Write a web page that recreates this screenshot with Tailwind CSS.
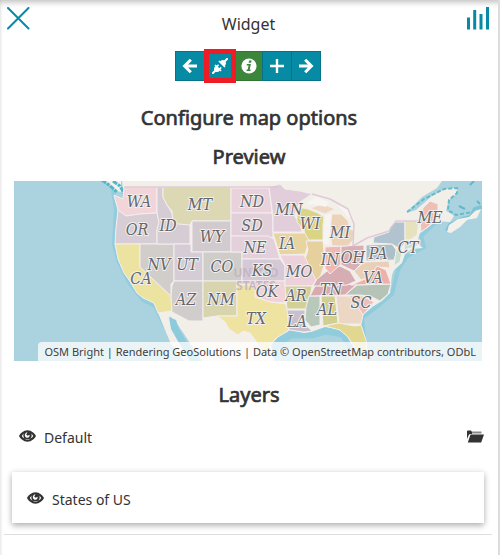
<!DOCTYPE html>
<html lang="en">
<head>
<meta charset="utf-8">
<meta name="viewport" content="width=device-width, initial-scale=1">
<title>Widget</title>
<script src="https://cdn.jsdelivr.net/npm/@tailwindcss/browser@4"></script>
</head>
<body class="bg-white text-[#333333] font-['Noto_Sans',sans-serif]">
<main class="min-h-screen border-r-2 border-[#dcdcdc] shadow-[inset_0_8px_6px_-6px_#bbbbbb,inset_4px_0_3px_-3px_#e4e4e4]">
  <header class="flex items-start justify-between pt-[7px] pl-[7px] pr-2">
    <button type="button" aria-label="Close" class="size-[23px]">
      <svg viewBox="0 0 23 23" class="size-full" fill="none" stroke="#078aa3" stroke-width="2" stroke-linecap="round"><path d="M1 1 21.500 21.500M21.500 1 1 21.500"/></svg>
    </button>
    <h1 class="mt-[6px] text-[16px] leading-[22px]">Widget</h1>
    <svg viewBox="0 0 23 23" class="size-[23px]" fill="#078aa3" role="img" aria-label="Chart widget"><path d="M0 10.500h3V22.500H0zM6.200 3h3V22.500h-3zM12.500 7h3V22.500h-3zM19 0h3V22.500h-3z"/></svg>
  </header>

  <nav aria-label="Widget steps" class="mt-4 flex justify-center pr-[2px]">
    <button type="button" aria-label="Back" class="flex h-[30px] w-[30px] items-center justify-center border border-[#067488] bg-[#078aa3]">
      <svg viewBox="0 0 16 16" class="size-4" fill="none" stroke="#fff" stroke-width="3"><path d="M15 8H3M8.800 1.800 2.600 8l6.200 6.200"/></svg>
    </button>
    <button type="button" aria-label="Connect to map" class="relative z-10 -ml-px flex h-[30px] w-[32px] items-center justify-center border border-[#067488] bg-[#078aa3]">
      <svg viewBox="0 0 16 16" class="size-4" fill="none" stroke="#fff"><path fill="#fff" stroke="none" d="M6.400 3.600 7.600 2.400 8.400 3.200C9.600 1.800 11.200 1.600 12.600 2.600L13.400 3.400C14.400 4.800 14.200 6.400 12.800 7.600L13.600 8.400 12.400 9.600zM2.400 7.600 3.600 6.400 9.600 12.400 8.400 13.600 7.600 12.800C6.400 14.200 4.800 14.400 3.400 13.400L2.600 12.600C1.600 11.200 1.800 9.600 3.200 8.400z"/><path stroke-width="2" d="M12.500 3.500 15.700.3M3.500 12.500.3 15.700"/><path stroke-width="1.600" d="M4.800 8.600 6.600 6.800M7.400 11.200 9.200 9.400"/></svg>
      <span class="absolute -inset-x-px -inset-y-[3px] border-[5px] border-[#ee1c25]"></span>
    </button>
    <button type="button" aria-label="Information" class="-ml-px flex h-[30px] w-[28px] items-center justify-center border border-[#327531] bg-[#3b863a]">
      <svg viewBox="0 0 16 16" class="size-4"><circle cx="8" cy="8" r="7.600" fill="#fff"/><path fill="#3b863a" d="M8.100 2.400h2.500l-.5 2.400H7.600zM5.900 6h4L8.700 11.600h1l-.3 1.400H5.500l.3-1.400h.9L7.600 7.400h-2z"/></svg>
    </button>
    <button type="button" aria-label="Add" class="-ml-px flex h-[30px] w-[30px] items-center justify-center border border-[#067488] bg-[#078aa3]">
      <svg viewBox="0 0 16 16" class="size-4" fill="#fff"><path d="M6.800 1h2.400v5.800H15v2.400H9.200V15H6.800V9.200H1V6.800h5.800z"/></svg>
    </button>
    <button type="button" aria-label="Next" class="-ml-px flex h-[30px] w-[30px] items-center justify-center border border-[#067488] bg-[#078aa3]">
      <svg viewBox="0 0 16 16" class="size-4" fill="none" stroke="#fff" stroke-width="3"><path d="M1 8h12M7.200 1.800 13.400 8l-6.200 6.200"/></svg>
    </button>
  </nav>

  <section class="mt-6 text-center">
    <h2 class="text-[20px] leading-[26px] font-normal [-webkit-text-stroke:0.7px_#333333]">Configure map options</h2>
    <h3 class="mt-[13px] text-[20px] leading-[26px] font-normal [-webkit-text-stroke:0.7px_#333333]">Preview</h3>
    <div class="relative mt-[11px] ml-[14px] mr-4">
      <svg viewBox="14 181 468 180" class="block w-full" role="img" aria-label="Map of the United States">
        <rect x="14" y="181" width="468" height="180" fill="#aad3df"/>
        <!-- shallow water along the coasts -->
        <g fill="none" stroke="#8ccbdc" stroke-width="4" stroke-linejoin="round" opacity=".8">
          <path d="M113 190 116 210 114 244 118 260 129 282 143 300 155 306 166 328 182 350 192 361M168 318 180 334 194 361"/>
          <path stroke-width="9" d="M275 358 274 346 290 334 312 334 326 330 343 333 357 353"/>
          <path d="M366 358 362 318 374 309 392 294 398 270 407 256 424 247 421 236 436 222"/>
        </g>
        <!-- mainland -->
        <path fill="#f2efe9" d="M122 181H442L437 188 422 197 408 211 407 213 416 210 432 196 445 189 457 189 455 195 447 200 446 211 453 215 449 221 438 218 430 226 420 233 417 243 423 248 412 249 405 254 402 263 394 270 392 275 391 284 390 293 382 301 372 307 362 316 361 325 367 345 366 361H362L355 350 347 336 338 329 325 327 311 332 304 333 290 330 278 337 271 345 274 361H202L188 340 178 325 170 316 172 326 181 344 194 361H184L171 344 165 330 158 313 154 303 143 298 137 293 129 280 124 273 118 259 115 244 116 228 118 210 114 197 124 199Z"/>
        <path fill="#8ccbdc" d="M169 317 176 320 180 332 188 344 199 361H190L179 343 171 329Z"/>
        <!-- Nova Scotia and the Gulf of St Lawrence -->
        <path fill="#f2efe9" d="M430 199 443 190 455 188 458 192 449 200 446 211 454 216 450 222 436 221Z"/>
        <path fill="none" stroke="#7cc5d4" stroke-width="4" stroke-linejoin="round" d="M447 231 450 225 462 219 471 217 475 209 482 207"/>
        <path fill="#f4f1ec" d="M447 232 449 225 458 219 469 217 475 211 481 209 477 218 467 220 460 227 451 233Z"/>
        <path fill="none" stroke="#67bac9" stroke-width="2" stroke-dasharray="4 2" d="M407 212 424 199 444 189 457 188 457 193 449 200 448 210 456 215 472 212"/>
        <path fill="none" stroke="#5fb9cb" stroke-width="2" d="M470 185 474 181M459 206 465 209M477 201 480 204"/>
        <path fill="#f4f1ec" d="M104 181H121L121 192 117 191Z"/>
        <path fill="none" stroke="#51b6c8" stroke-width="3" stroke-dasharray="5 1 3 1" d="M102 180 109 185 117 192M113 181 120 186 125 195 125 203"/>
        <!-- states -->
        <g stroke="#f3eeee" stroke-width="1" stroke-linejoin="round">
          <path fill="#f2d5d9" d="M114 195 123 199 124 187H157V213L140 214 126 216 118 210Z"/>
          <path fill="#d7cdd5" d="M118 210 126 216 140 214 157 213 159 222 157 230V244H115L116 228Z"/>
          <path fill="#ece3a0" d="M115 244H140V267L171 296 172 311 158 313 154 303 143 298 137 293 129 280 124 273 118 259Z"/>
          <path fill="#d0cdca" d="M140 244H174V281L171 284V296L140 267Z"/>
          <path fill="#d5ccd4" d="M157 187H163V197L167 205 172 213 173 223 190 224V244H157V230L159 222 157 213Z"/>
          <path fill="#ddd8b4" d="M163 187H231V221H192L190 225 178 224 173 222 172 211 167 205 163 197Z"/>
          <path fill="#d1cacf" d="M192 221H231V252H192Z"/>
          <path fill="#d6ccd5" d="M174 244H191V252H203V281H174Z"/>
          <path fill="#cfcdca" d="M203 252H242V281H203Z"/>
          <path fill="#d2cdcd" d="M174 281H203V321H189L172 312 171 296 172 286Z"/>
          <path fill="#d8d4ae" d="M203 281H237V316H217L203 318Z"/>
          <path fill="#ead2dc" d="M231 188H269L272 213H231Z"/>
          <path fill="#e3cfda" d="M231 213H272L273 220V238L268 237 231 236Z"/>
          <path fill="#e4d0db" d="M231 236H268L274 239 280 259H242V252H231Z"/>
          <path fill="#d5c9d8" d="M242 259H280L285 266V281H242Z"/>
          <path fill="#f0d3d9" d="M237 281H285L286 303 270 302 255 297V285H237Z"/>
          <path fill="#eee3a0" d="M237 285H255V297L270 302 286 304 288 315 290 325 288 331 276 338 270 346 272 356 262 351 256 341 250 333 243 331 238 335 229 329 225 322 217 316H237Z"/>
          <path fill="#e2cedb" d="M269 187 280 184 285 189 300 191 312 194 300 202 296 211 295 217 300 224 302 232H273V216Z"/>
          <path fill="#dad486" d="M297 207 308 209 318 213 324 217 323 225V240H306L304 230 297 222Z"/>
          <path fill="#e8d49f" d="M273 233H305L309 241 305 254 280 255Z"/>
          <path fill="#e6d09d" d="M306 241H323L325 262 321 275 316 281 309 270 304 262 308 250Z"/>
          <path fill="#ecd0da" d="M280 255H304L310 268 316 280 312 286H285V265Z"/>
          <path fill="#d2d096" d="M285 286H312L310 297 306 309H287Z"/>
          <path fill="#c7c0ce" d="M287 310H305V324L312 331 304 332 289 330Z"/>
          <path fill="#b8c9bc" d="M309 296H320V325L311 327 305 320 306 307Z"/>
          <path fill="#d0cf90" d="M321 296H335L338 323 323 326Z"/>
          <path fill="#ecd6c4" d="M336 296H349L355 302 363 315 361 324H339Z"/>
          <path fill="#e2d78e" d="M325 326 338 323 355 326 361 325 366 340 367 352 364 361 357 351 348 337 340 330Z"/>
          <path fill="#efbfb7" d="M349 296 360 295 374 302 363 315 356 304Z"/>
          <path fill="#b6c4b7" d="M345 295 357 285 391 284 388 294 380 301 370 296 360 295Z"/>
          <path fill="#d9abb1" d="M315 286 357 284 345 295 310 296Z"/>
          <path fill="#d6adb3" d="M317 279 327 271 340 266 350 271 356 281 347 285 313 286Z"/>
          <path fill="#efb8b2" d="M325 247 341 246V264L330 274 325 268Z"/>
          <path fill="#d8b0b6" d="M341 246 364 245V258L360 265 354 271 341 265Z"/>
          <path fill="#eacfb8" d="M354 271 364 262 389 261 390 268 377 267 370 277 361 280Z"/>
          <path fill="#efb0aa" d="M351 285 370 277 377 266 386 270 391 284Z"/>
          <path fill="#acc0ca" d="M366 245 392 244 397 251 394 260 366 261Z"/>
          <path fill="#b1c3cf" d="M374 237 389 232 390 227 396 222H405V243L400 249 392 244 373 243Z"/>
          <path fill="#e5e2bd" d="M405 221H419L417 235 410 240H405Z"/>
          <path fill="#c9e0ce" d="M405 240H420L417 246 404 250ZM396 250 402 252 400 262 394 266Z"/>
          <path fill="#efbeb4" d="M420 221 423 208 430 201 438 204V217L430 225 421 232Z"/>
          <path fill="#ecd2b6" d="M332 214 341 214 348 221 350 229 354 231 353 240 348 246H332L330 230Z"/>
          <path fill="#eed8c3" d="M310 208 323 204 335 209 325 214Z"/>
        </g>
        <path fill="#f7f4f1" d="M306 204 316 197 329 202 326 207 317 205ZM325 215 331 214 329 245 323 244ZM337 205 348 208 354 219 348 217Z"/>
        <path fill="none" stroke="#dbc0d2" stroke-width="1.500" stroke-linejoin="round" opacity=".8" d="M124 187H278M312 194 330 199 348 209 354 224 353 246 367 238 389 231 396 221H419"/>
        <g fill="#c4b6bf" font-family="'Noto Sans',sans-serif" font-size="12" font-weight="600" text-anchor="middle">
          <text x="256" y="277">UNITED</text><text x="256" y="290">STATES</text>
        </g>
        <g fill="#65666a" stroke="#f4f0ee" stroke-width="2" paint-order="stroke" stroke-linejoin="round" font-family="'DejaVu Serif Condensed','DejaVu Serif',serif" font-style="italic" font-size="16" text-anchor="middle">
          <text x="139" y="207">WA</text><text x="137" y="235">OR</text><text x="168" y="231">ID</text>
          <text x="200" y="210">MT</text><text x="252" y="207">ND</text><text x="289" y="215">MN</text>
          <text x="212" y="242">WY</text><text x="252" y="231">SD</text><text x="310" y="229">WI</text>
          <text x="340" y="238">MI</text><text x="255" y="253">NE</text><text x="287" y="249">IA</text>
          <text x="159" y="270">NV</text><text x="187" y="270">UT</text><text x="222" y="272">CO</text>
          <text x="262" y="276">KS</text><text x="299" y="277">MO</text><text x="330" y="265">IN</text>
          <text x="353" y="263">OH</text><text x="378" y="259">PA</text><text x="408" y="253">CT</text>
          <text x="430" y="223">ME</text><text x="141" y="284">CA</text><text x="186" y="305">AZ</text>
          <text x="221" y="305">NM</text><text x="267" y="297">OK</text><text x="296" y="301">AR</text>
          <text x="331" y="295">TN</text><text x="373" y="283">VA</text><text x="361" y="308">SC</text>
          <text x="327" y="315">AL</text><text x="297" y="327">LA</text><text x="256" y="324">TX</text>
        </g>
      </svg>
      <p class="absolute right-0 bottom-0 rounded-tl bg-white/75 px-[6px] text-[11px] leading-[19px] whitespace-nowrap text-[#404040]">OSM Bright | Rendering GeoSolutions | Data © <a href="#">OpenStreetMap</a> contributors, <a href="#">ODbL</a></p>
    </div>
  </section>

  <section class="mt-[21px]">
    <h3 class="text-center text-[20px] leading-[26px] font-normal [-webkit-text-stroke:0.7px_#333333]">Layers</h3>
    <div class="mt-5 flex items-center pr-[14px] pl-[19px]">
      <button type="button" aria-label="Toggle Default visibility" class="mb-1">
        <svg viewBox="0 0 17 12" class="block h-3 w-[17px]"><path fill="#333" fill-rule="evenodd" d="M8.500.3C12.500.3 15.700 3.500 17 6c-1.300 2.500-4.500 5.700-8.500 5.700S1.300 8.500 0 6C1.300 3.500 4.500.3 8.500.3zM4.800 3.600C3.800 4.300 3.300 5.100 2.800 6c1 1.500 3 3.300 5.700 3.300S13.200 7.500 14.200 6c-.5-.9-1-1.700-2-2.400.3.600.5 1.200.5 1.900a4.200 4.200 0 0 1-8.400 0c0-.7.200-1.300.5-1.900zM8.500 2.300 7.200 4.500l1.500 1.300 1.800-1c.5 1.500-.5 3-2 3S5.800 6.700 5.800 5.200 7 2.400 8.500 2.300z"/></svg>
      </button>
      <span class="ml-2 text-[14px] leading-5">Default</span>
      <button type="button" aria-label="Toggle Default group" class="mb-1 ml-auto">
        <svg viewBox="0 0 18 13" class="block h-[13px] w-[18px]" fill="#333"><path d="M1 9V1.500L1.500.5H5L6 2V4H4.500L3 4.500Z"/><path fill="#888" d="M6 1.500h9.500V3.500H6z"/><path d="M4.500 4.500H18L15.200 12.500H1.800Z"/></svg>
      </button>
    </div>
    <div class="mt-6 mr-[14px] ml-3 flex h-[51px] items-center bg-white px-[15px] pt-1 shadow-[0_3px_6px_rgba(0,0,0,0.25),0_0_6px_rgba(0,0,0,0.1)]">
      <button type="button" aria-label="Toggle States of US visibility" class="mb-1">
        <svg viewBox="0 0 17 12" class="block h-3 w-[17px]"><path fill="#333" fill-rule="evenodd" d="M8.500.3C12.500.3 15.700 3.500 17 6c-1.300 2.500-4.500 5.700-8.500 5.700S1.300 8.500 0 6C1.300 3.500 4.500.3 8.500.3zM4.800 3.600C3.800 4.300 3.300 5.100 2.800 6c1 1.500 3 3.300 5.700 3.300S13.200 7.500 14.200 6c-.5-.9-1-1.700-2-2.400.3.600.5 1.200.5 1.900a4.200 4.200 0 0 1-8.400 0c0-.7.200-1.300.5-1.900zM8.500 2.300 7.200 4.500l1.500 1.300 1.800-1c.5 1.500-.5 3-2 3S5.800 6.700 5.800 5.200 7 2.400 8.500 2.300z"/></svg>
      </button>
      <span class="ml-2 text-[14px] leading-5">States of US</span>
    </div>
    <hr class="mt-[11px] mr-[6px] ml-1 border-[#dddddd]">
  </section>
</main>
</body>
</html>
